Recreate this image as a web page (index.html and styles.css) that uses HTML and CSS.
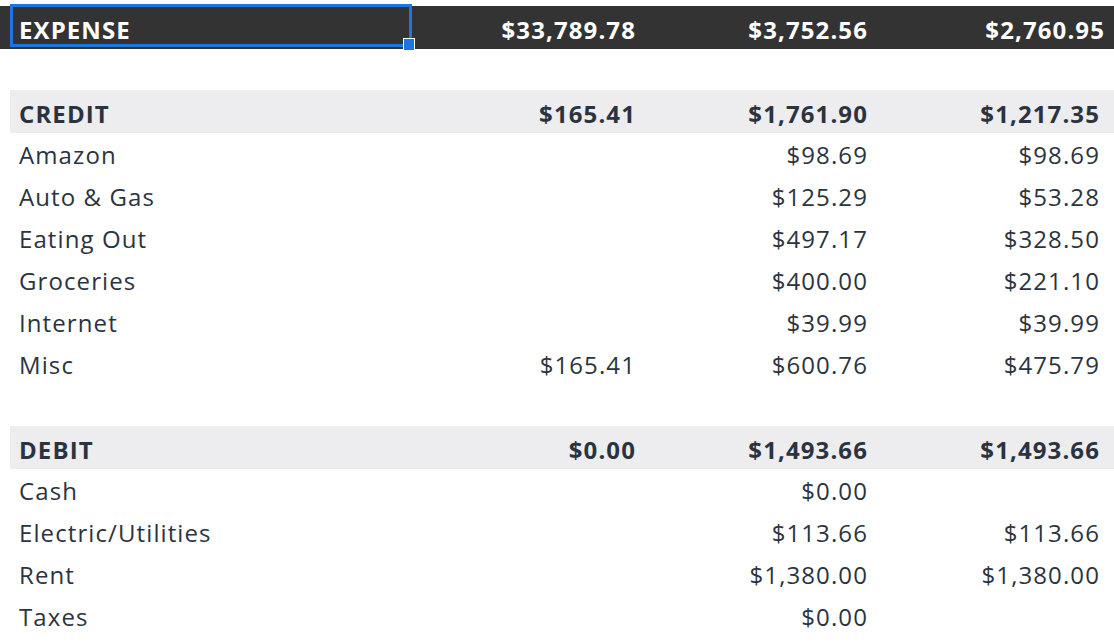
FILE: index.html
```html
<!DOCTYPE html>
<html>
<head>
<meta charset="utf-8">
<link rel="stylesheet" href="styles.css">
</head>
<body>
<div class="sheet">
  <div class="row total">
    <div class="cell label">EXPENSE</div>
    <div class="cell num">$33,789.78</div>
    <div class="cell num">$3,752.56</div>
    <div class="cell num">$2,760.95</div>
    <div class="selection"><span class="handle"></span></div>
  </div>
  <div class="row blank"></div>
  <div class="row group">
    <div class="cell label">CREDIT</div>
    <div class="cell num">$165.41</div>
    <div class="cell num">$1,761.90</div>
    <div class="cell num">$1,217.35</div>
  </div>
  <div class="row">
    <div class="cell label">Amazon</div>
    <div class="cell num"></div>
    <div class="cell num">$98.69</div>
    <div class="cell num">$98.69</div>
  </div>
  <div class="row">
    <div class="cell label">Auto &amp; Gas</div>
    <div class="cell num"></div>
    <div class="cell num">$125.29</div>
    <div class="cell num">$53.28</div>
  </div>
  <div class="row">
    <div class="cell label">Eating Out</div>
    <div class="cell num"></div>
    <div class="cell num">$497.17</div>
    <div class="cell num">$328.50</div>
  </div>
  <div class="row">
    <div class="cell label">Groceries</div>
    <div class="cell num"></div>
    <div class="cell num">$400.00</div>
    <div class="cell num">$221.10</div>
  </div>
  <div class="row">
    <div class="cell label">Internet</div>
    <div class="cell num"></div>
    <div class="cell num">$39.99</div>
    <div class="cell num">$39.99</div>
  </div>
  <div class="row">
    <div class="cell label">Misc</div>
    <div class="cell num">$165.41</div>
    <div class="cell num">$600.76</div>
    <div class="cell num">$475.79</div>
  </div>
  <div class="row blank"></div>
  <div class="row group">
    <div class="cell label">DEBIT</div>
    <div class="cell num">$0.00</div>
    <div class="cell num">$1,493.66</div>
    <div class="cell num">$1,493.66</div>
  </div>
  <div class="row">
    <div class="cell label">Cash</div>
    <div class="cell num"></div>
    <div class="cell num">$0.00</div>
    <div class="cell num"></div>
  </div>
  <div class="row">
    <div class="cell label">Electric/Utilities</div>
    <div class="cell num"></div>
    <div class="cell num">$113.66</div>
    <div class="cell num">$113.66</div>
  </div>
  <div class="row">
    <div class="cell label">Rent</div>
    <div class="cell num"></div>
    <div class="cell num">$1,380.00</div>
    <div class="cell num">$1,380.00</div>
  </div>
  <div class="row">
    <div class="cell label">Taxes</div>
    <div class="cell num"></div>
    <div class="cell num">$0.00</div>
    <div class="cell num"></div>
  </div>
</div>
</body>
</html>
```
FILE: styles.css
```css
html, body {
  margin: 0;
  padding: 0;
  background: #ffffff;
}
body {
  font-family: "Open Sans", "Liberation Sans", sans-serif;
  font-size: 24px;
  letter-spacing: 1.1px;
  color: #2b343e;
  overflow: hidden;
}
.sheet {
  padding: 6px 0 0 10px;
}
.row {
  position: relative;
  display: grid;
  grid-template-columns: 402px 233px 232px 237px;
  height: 42px;
  align-items: center;
}
.cell {
  padding: 4px 9px 0 9px;
  white-space: nowrap;
  line-height: 38px;
}
.cell.num {
  text-align: right;
}
.row .cell:last-child {
  padding-right: 14px;
}
.row.group {
  background: #ededf0;
  font-weight: 700;
  height: 43px;
  margin-bottom: -1px;
}
.row.total {
  background: #333333;
  color: #ffffff;
  font-weight: 700;
  height: 43px;
  margin: 0 0 -1px -10px;
  padding-left: 10px;
}
.selection {
  position: absolute;
  left: 10px;
  top: -2px;
  width: 396px;
  height: 37px;
  border: 3px solid #1f74e0;
  pointer-events: none;
}
.handle {
  position: absolute;
  right: -6px;
  bottom: -7px;
  width: 10px;
  height: 11px;
  background: #1f74e0;
  border: 1px solid #ffffff;
}
```
